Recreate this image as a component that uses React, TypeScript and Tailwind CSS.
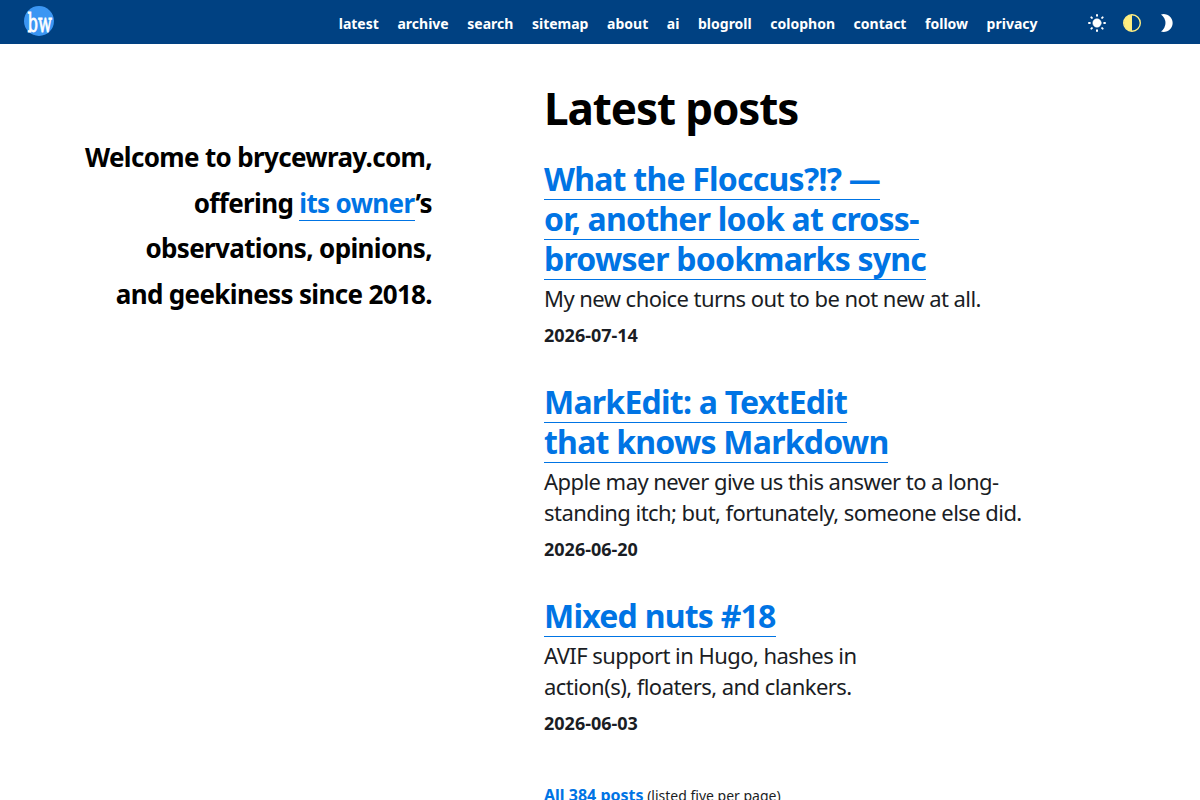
const navItems = ['latest', 'archive', 'search', 'sitemap', 'about', 'ai', 'blogroll', 'colophon', 'contact', 'follow', 'privacy']

const posts = [
    { title: ['What the Floccus?!? —', 'or, another look at cross-', 'browser bookmarks sync'], desc: ['My new choice turns out to be not new at all.'], date: '2026-07-14' },
    { title: ['MarkEdit: a TextEdit', 'that knows Markdown'], desc: ['Apple may never give us this answer to a long-', 'standing itch; but, fortunately, someone else did.'], date: '2026-06-20' },
    { title: ['Mixed nuts #18'], desc: ['AVIF support in Hugo, hashes in', 'action(s), floaters, and clankers.'], date: '2026-06-03' },
]

function Logo() {
    return (
        <svg className="ml-6 h-[30px] w-[30px] -translate-y-px" viewBox="0 0 30 30">
            <circle cx="15" cy="15" r="15" fill="#3b96f3" />
            <text transform="translate(3.5 25.5) scale(.64 1)" fontSize="26" fill="#fff" stroke="#fff" strokeWidth=".8" fontFamily="DejaVu Serif, serif" textLength="38" lengthAdjust="spacingAndGlyphs">bw</text>
        </svg>
    )
}

function ThemeIcons() {
    return (
        <div className="ml-[49.5px] mr-[23px] flex items-center gap-[15px] pt-0.5">
            <svg className="h-5 w-5" viewBox="0 0 20 20" fill="#fff" stroke="#fff" strokeWidth="2" strokeLinecap="round">
                <circle cx="10" cy="10" r="4.2" strokeWidth=".5" />
                {[0, 45, 90, 135, 180, 225, 270, 315].map((angle) => (
                    <path key={angle} d="M10 2v.8" transform={`rotate(${angle} 10 10)`} />
                ))}
            </svg>
            <svg className="h-5 w-5" viewBox="0 0 20 20">
                <circle cx="10" cy="10" r="8.3" fill="none" stroke="#ffee80" strokeWidth="1.4" />
                <path d="M10 2a8 8 0 0 0 0 16z" fill="#ffee80" />
            </svg>
            <svg className="h-5 w-5" viewBox="0 0 20 20" fill="#fff">
                <path d="M4 1.4a9 9 0 1 1 0 17.2a10.5 10.5 0 0 0 0-17.2z" />
            </svg>
        </div>
    )
}

export default function App() {
    return (
        <div className="h-screen overflow-hidden bg-white font-['Noto_Sans',sans-serif] text-black">
            <header className="flex h-11 items-center bg-[#004182]">
                <Logo />
                <nav className="ml-auto flex gap-[18.6px] pt-1 text-sm font-bold text-white">
                    {navItems.map((item) => (
                        <a key={item} href="#">{item}</a>
                    ))}
                </nav>
                <ThemeIcons />
            </header>
            <main className="flex">
                <section className="w-[432px] shrink-0 pt-[91px] text-right text-[26px] leading-[45.6px] font-bold tracking-tight">
                    <p>
                        Welcome to brycewray.com,<br />
                        offering <a href="#" className="inline-block border-b border-[#0074e4] pr-px leading-[34px] text-[#0074e4]">its owner</a>’s<br />
                        observations, opinions,<br />
                        and geekiness since 2018.
                    </p>
                </section>
                <section className="ml-28 whitespace-nowrap">
                    <h1 className="mt-[37px] text-[44px] leading-[54px] font-bold tracking-tight">Latest posts</h1>
                    <div className="mt-[24px] flex flex-col gap-[27px]">
                        {posts.map(({ title, desc, date }) => (
                            <article key={date}>
                                <h2 className="flex flex-col items-start text-[32px] leading-10 font-bold tracking-[-0.77px]">
                                    {title.map((line) => (
                                        <a key={line} href="#" className="-mb-px h-[41px] border-b border-[#0074e4] text-[#0074e4]">{line}</a>
                                    ))}
                                </h2>
                                <p className="mt-1 text-[22px] leading-[31px] tracking-tight text-[#1a1d24]">
                                    {desc.map((line) => (
                                        <span key={line} className="block">{line}</span>
                                    ))}
                                </p>
                                <p className="pt-px text-[18px] leading-[40px] font-bold text-[#1a1d24]">{date}</p>
                            </article>
                        ))}
                    </div>
                    <p className="mt-10 text-sm text-[#1a1d24]"><a href="#" className="text-base font-bold text-[#0074e4]">All 384 posts</a> (listed five per page)</p>
                </section>
            </main>
        </div>
    )
}
